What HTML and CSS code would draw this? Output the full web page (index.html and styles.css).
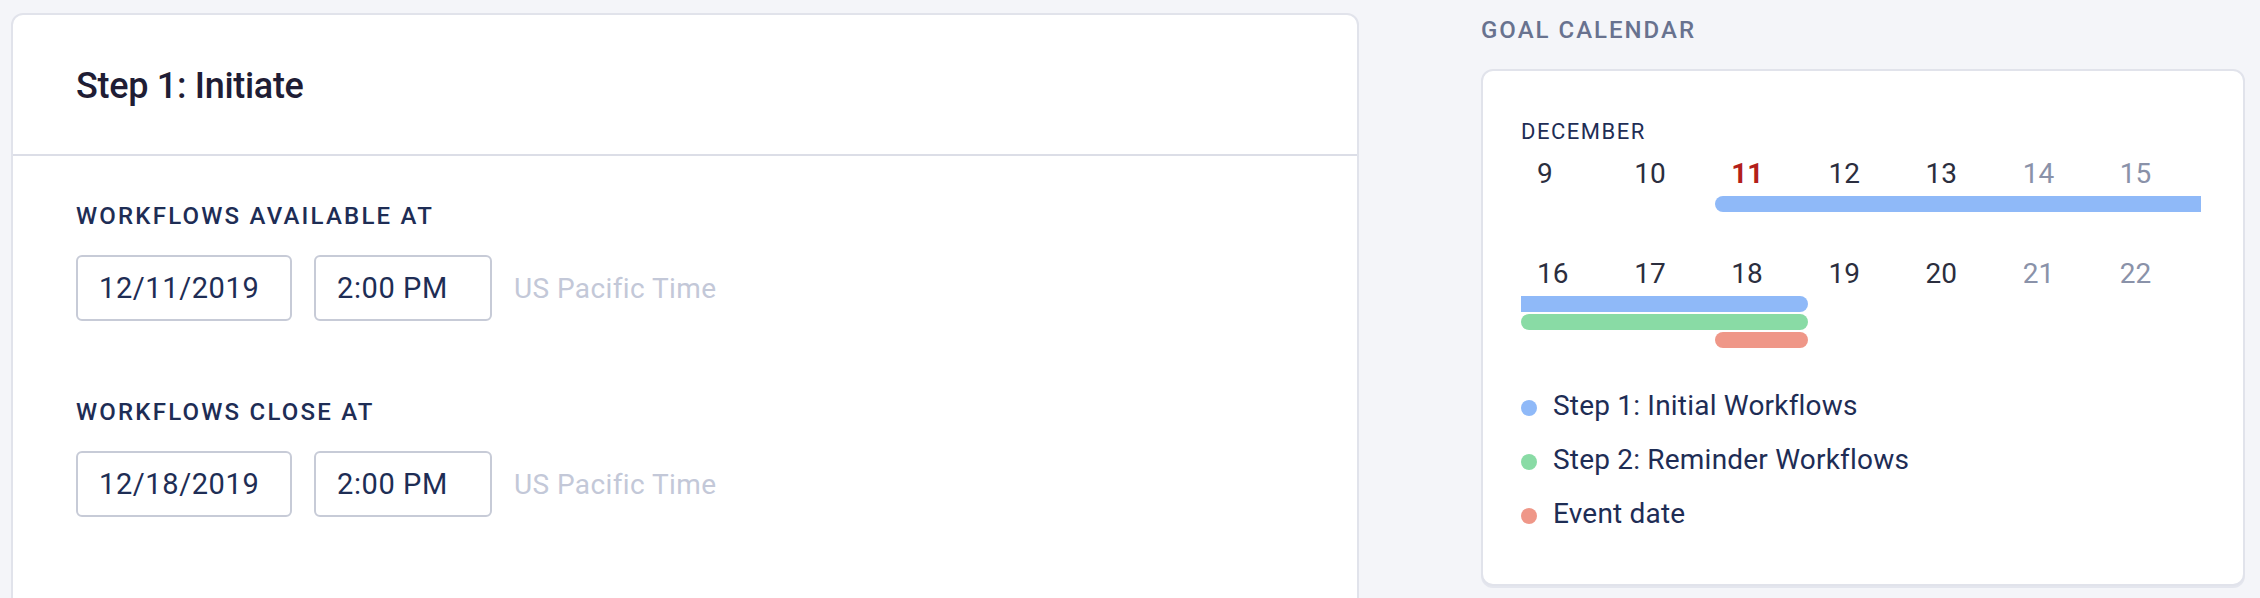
FILE: index.html
```html
<!DOCTYPE html>
<html lang="en">
<head>
  <meta charset="UTF-8" />
  <title>Goal Calendar</title>
  <link rel="stylesheet" href="styles.css">
</head>
<body>
  <div class="page">
    <!-- Step card -->
    <section class="step-card">
      <header class="step-head">
        <h2>Step 1: Initiate</h2>
      </header>
      <div class="step-body">
        <div class="field">
          <label class="field-label">Workflows available at</label>
          <div class="field-row">
            <input class="input date" type="text" value="12/11/2019">
            <input class="input time" type="text" value="2:00 PM">
            <span class="tz">US Pacific Time</span>
          </div>
        </div>
        <div class="field">
          <label class="field-label">Workflows close at</label>
          <div class="field-row">
            <input class="input date" type="text" value="12/18/2019">
            <input class="input time" type="text" value="2:00 PM">
            <span class="tz">US Pacific Time</span>
          </div>
        </div>
      </div>
    </section>

    <!-- Calendar -->
    <aside class="goal">
      <h3 class="goal-title">Goal Calendar</h3>
      <div class="cal-card">
        <div class="month">December</div>

        <div class="week">
          <div class="days">
            <span>9</span>
            <span>10</span>
            <span class="today">11</span>
            <span>12</span>
            <span>13</span>
            <span class="weekend">14</span>
            <span class="weekend">15</span>
          </div>
          <div class="lanes">
            <div class="bar blue open-right" style="grid-column: 3 / 8; grid-row: 1;"></div>
          </div>
        </div>

        <div class="week">
          <div class="days">
            <span>16</span>
            <span>17</span>
            <span>18</span>
            <span>19</span>
            <span>20</span>
            <span class="weekend">21</span>
            <span class="weekend">22</span>
          </div>
          <div class="lanes">
            <div class="bar blue open-left" style="grid-column: 1 / 4; grid-row: 1;"></div>
            <div class="bar green" style="grid-column: 1 / 4; grid-row: 2;"></div>
            <div class="bar red" style="grid-column: 3 / 4; grid-row: 3;"></div>
          </div>
        </div>

        <ul class="legend">
          <li><span class="dot blue"></span>Step 1: Initial Workflows</li>
          <li><span class="dot green"></span>Step 2: Reminder Workflows</li>
          <li><span class="dot red"></span>Event date</li>
        </ul>
      </div>
    </aside>
  </div>
</body>
</html>
```

FILE: styles.css
```css
* {
  margin: 0;
  padding: 0;
  box-sizing: border-box;
  font-family: Roboto, 'Liberation Sans', sans-serif;
}

html, body {
  height: 100%;
  overflow: hidden;
}

body {
  background-color: #f4f5f9;
  color: #1e2d55;
}

.page {
  display: flex;
  align-items: flex-start;
  gap: 122px;
  padding: 13px 15px 0 11px;
}

/* Step card */
.step-card {
  width: 1348px;
  height: 620px;
  flex-shrink: 0;
  background: white;
  border: 2px solid #e1e3eb;
  border-radius: 12px;
}

.step-head {
  height: 141px;
  display: flex;
  align-items: center;
  padding: 2px 0 0 63px;
  border-bottom: 2px solid #dcdee7;
}

.step-head h2 {
  font-size: 36px;
  font-weight: 500;
  color: #1f1d35;
  letter-spacing: -0.3px;
}

.step-body {
  padding: 45px 0 0 63px;
}

.field + .field {
  margin-top: 76px;
}

.field-label {
  display: block;
  font-size: 24px;
  line-height: 30px;
  font-weight: 500;
  text-transform: uppercase;
  letter-spacing: 2.2px;
  color: #1e2d55;
}

.field-row {
  display: flex;
  align-items: center;
  gap: 22px;
  margin-top: 24px;
}

.input {
  height: 66px;
  padding: 0 0 0 21px;
  border: 2px solid #c7cbd7;
  border-radius: 6px;
  font-size: 29px;
  letter-spacing: 0.6px;
  color: #1e2d55;
  background: white;
  outline: none;
}

.input.date {
  width: 216px;
}

.input.time {
  width: 178px;
}

.tz {
  font-size: 28px;
  letter-spacing: 0.4px;
  color: #c3c8d8;
}

/* Calendar */
.goal {
  width: 764px;
  flex-shrink: 0;
}

.goal-title {
  margin-top: 2px;
  font-size: 24px;
  line-height: 30px;
  font-weight: 500;
  text-transform: uppercase;
  letter-spacing: 2px;
  color: #68728f;
}

.cal-card {
  margin-top: 24px;
  height: 517px;
  padding: 48px 42px 0 38px;
  background: white;
  border: 2px solid #e1e3eb;
  border-radius: 12px;
  box-shadow: 0 2px 0 #e4e6ee;
}

.month {
  font-size: 22px;
  line-height: 26px;
  text-transform: uppercase;
  letter-spacing: 1.5px;
  color: #1e2d55;
}

.week {
  margin-top: 12px;
}

.week + .week {
  margin-top: 9px;
}

.days,
.lanes {
  display: grid;
  grid-template-columns: repeat(7, 1fr);
}

.days span {
  padding-left: 16px;
  font-size: 28px;
  line-height: 34px;
  color: #2b2e3e;
}

.days .today {
  color: #b31f1b;
  font-weight: 700;
}

.days .weekend {
  color: #8a92a9;
}

.lanes {
  margin-top: 5px;
  height: 52px;
  grid-template-rows: repeat(3, 16px);
  row-gap: 2px;
}

.bar {
  border-radius: 8px;
  margin-right: 4px;
}

.bar.open-right {
  margin-right: 0;
  border-radius: 8px 0 0 8px;
}

.bar.open-left {
  border-radius: 0 8px 8px 0;
}

.blue { background: #8fb9f8; }
.green { background: #89dba5; }
.red { background: #ef9788; }

.legend {
  list-style: none;
  margin-top: 41px;
}

.legend li {
  display: flex;
  align-items: center;
  gap: 16px;
  font-size: 28px;
  line-height: 34px;
  letter-spacing: 0.2px;
  color: #1e2d55;
}

.legend li + li {
  margin-top: 20px;
}

.dot {
  width: 16px;
  height: 16px;
  border-radius: 50%;
  margin-top: 3px;
}
```
